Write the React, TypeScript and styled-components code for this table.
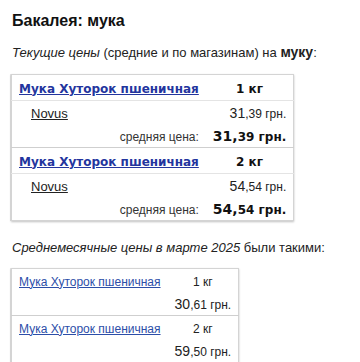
import { Fragment } from "react";
import styled, { createGlobalStyle } from "styled-components";

const Global = createGlobalStyle`
    body {
        margin: 0;
        background: #fff;
        font-family: "Liberation Sans", Arial, sans-serif;
        color: #222;
    }
`;

const Page = styled.div`
    padding: 11px 11px 0 11px;
`;

const Title = styled.h1`
    margin: 0 0 0 1px;
    font-size: 16px;
    line-height: 19px;
    font-weight: 700;
    color: #111;
`;

const Lead = styled.p`
    margin: 14px 0 13px 1px;
    font-size: 13px;
    line-height: 16px;
    color: #222;
    b {
        font-weight: 700;
        font-size: 14px;
    }
`;

const Table = styled.table<{ $width: number }>`
    width: ${(p) => p.$width}px;
    border-collapse: collapse;
    border: 1px solid #d4d4d4;
    box-shadow: 0 1px 2px rgba(0, 0, 0, 0.25), -1px 0 0 #e6e6e6;
`;

const HeadRow = styled.tr`
    border-top: 1px solid #cfcfcf;
    &:first-child {
        border-top: none;
    }
`;

const Cell = styled.td<{ $align?: string; $h: number }>`
    height: ${(p) => p.$h}px;
    padding: 0 7px;
    text-align: ${(p) => p.$align || "left"};
    vertical-align: middle;
    white-space: nowrap;
`;

const SubCell = styled(Cell)`
    border-top: 1px solid #e4e4e4;
`;

const BoldLink = styled.a`
    font-family: "DejaVu Sans", Verdana, sans-serif;
    font-weight: 700;
    font-size: 12px;
    color: #23359e;
    text-decoration: underline;
`;

const Weight = styled.span`
    font-family: "DejaVu Sans", Verdana, sans-serif;
    font-weight: 700;
    font-size: 12px;
    color: #111;
`;

const Shop = styled.a`
    margin-left: 12px;
    font-size: 13px;
    color: #222;
    text-decoration: underline;
`;

const Price = styled.span`
    font-size: 14px;
    color: #222;
    small {
        font-size: 12px;
    }
`;

const AvgLabel = styled.span`
    font-size: 12px;
    color: #333;
`;

const AvgPrice = styled.span`
    font-family: "DejaVu Sans", Verdana, sans-serif;
    font-weight: 700;
    font-size: 14px;
    color: #111;
    small {
        font-size: 12px;
    }
`;

const Caption = styled.p`
    margin: 19px 0 12px 1px;
    font-size: 13px;
    line-height: 16px;
    color: #222;
`;

const PlainLink = styled.a`
    font-size: 12px;
    color: #2c4ea8;
    text-decoration: underline;
`;

const PlainWeight = styled.span`
    font-size: 12px;
    color: #222;
`;

const current = [
    { name: "Мука Хуторок пшеничная", weight: "1 кг", shop: "Novus", whole: "31", cents: "39" },
    { name: "Мука Хуторок пшеничная", weight: "2 кг", shop: "Novus", whole: "54", cents: "54" },
];

const monthly = [
    { name: "Мука Хуторок пшеничная", weight: "1 кг", whole: "30", cents: "61" },
    { name: "Мука Хуторок пшеничная", weight: "2 кг", whole: "59", cents: "50" },
];

export default function App() {
    return (
        <>
            <Global />
            <Page>
                <Title>Бакалея: мука</Title>
                <Lead>
                    <i>Текущие цены</i> (средние и по магазинам) на <b>муку</b>:
                </Lead>
                <Table $width={283}>
                    <colgroup>
                        <col style={{ width: 194 }} />
                        <col />
                    </colgroup>
                    <tbody>
                        {current.map((item, idx) => (
                            <Fragment key={idx}>
                                <HeadRow>
                                    <Cell $h={25}>
                                        <BoldLink href="#">{item.name}</BoldLink>
                                    </Cell>
                                    <Cell $h={25} $align="center">
                                        <Weight>{item.weight}</Weight>
                                    </Cell>
                                </HeadRow>
                                <tr>
                                    <SubCell $h={23}>
                                        <Shop href="#">{item.shop}</Shop>
                                    </SubCell>
                                    <SubCell $h={23} $align="right">
                                        <Price>
                                            {item.whole}
                                            <small>,{item.cents} грн.</small>
                                        </Price>
                                    </SubCell>
                                </tr>
                                <tr>
                                    <Cell $h={23} $align="right">
                                        <AvgLabel>средняя цена:</AvgLabel>
                                    </Cell>
                                    <Cell $h={23} $align="right">
                                        <AvgPrice>
                                            {item.whole},<small>{item.cents} грн.</small>
                                        </AvgPrice>
                                    </Cell>
                                </tr>
                            </Fragment>
                        ))}
                    </tbody>
                </Table>
                <Caption>
                    <i>Среднемесячные цены в марте 2025</i> были такими:
                </Caption>
                <Table $width={228}>
                    <colgroup>
                        <col style={{ width: 159 }} />
                        <col />
                    </colgroup>
                    <tbody>
                        {monthly.map((item, idx) => (
                            <Fragment key={idx}>
                                <HeadRow>
                                    <Cell $h={23}>
                                        <PlainLink href="#">{item.name}</PlainLink>
                                    </Cell>
                                    <Cell $h={23} $align="center">
                                        <PlainWeight>{item.weight}</PlainWeight>
                                    </Cell>
                                </HeadRow>
                                <tr>
                                    <Cell $h={23} />
                                    <Cell $h={23} $align="right">
                                        <Price>
                                            {item.whole}
                                            <small>,{item.cents} грн.</small>
                                        </Price>
                                    </Cell>
                                </tr>
                            </Fragment>
                        ))}
                    </tbody>
                </Table>
            </Page>
        </>
    );
}
